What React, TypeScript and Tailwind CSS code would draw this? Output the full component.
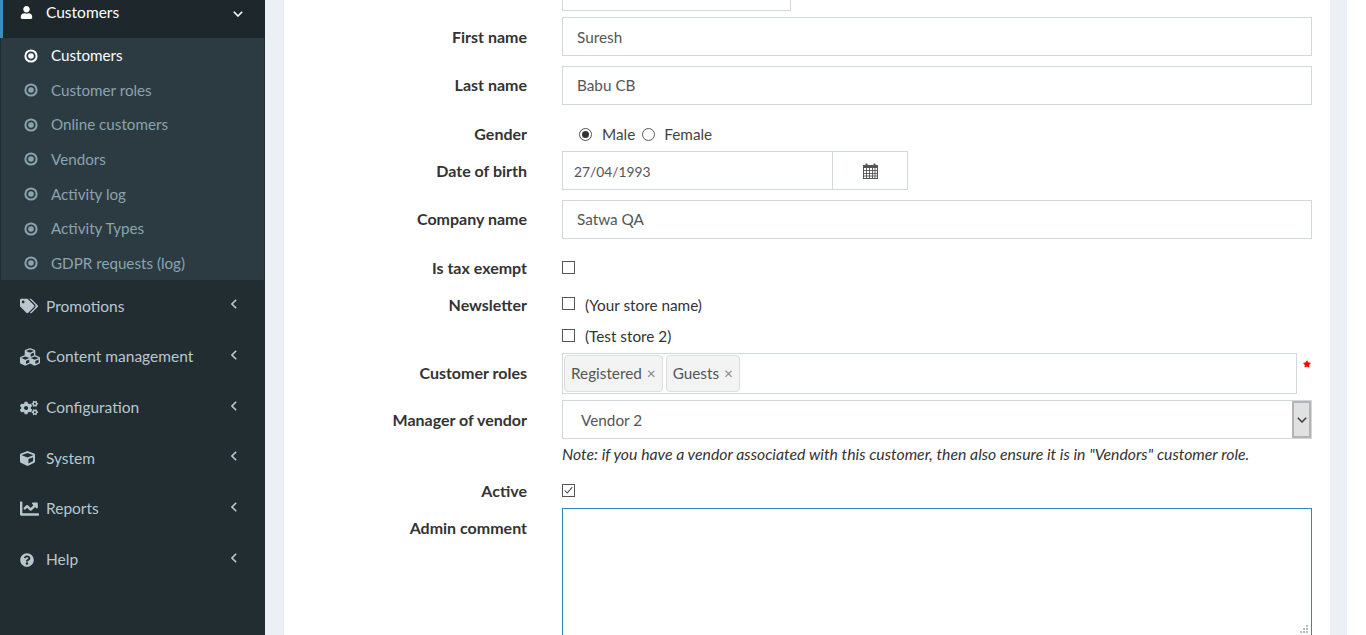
import type { ReactNode } from 'react';
import { FaUser, FaTags, FaCubes, FaCogs, FaCube, FaChartLine, FaQuestionCircle, FaStar } from 'react-icons/fa';

const subItems = ['Customers', 'Customer roles', 'Online customers', 'Vendors', 'Activity log', 'Activity Types', 'GDPR requests (log)'];

const navItems = [
  { label: 'Promotions', icon: <FaTags size={18} /> },
  { label: 'Content management', icon: <FaCubes size={20} /> },
  { label: 'Configuration', icon: <FaCogs size={18} /> },
  { label: 'System', icon: <FaCube size={15} /> },
  { label: 'Reports', icon: <FaChartLine size={19} /> },
  { label: 'Help', icon: <FaQuestionCircle size={14} /> },
];

function DotCircle() {
  return (
    <svg viewBox="0 0 14 14" className="h-[14px] w-[14px]" fill="none" stroke="currentColor">
      <circle cx="7" cy="7" r="5.6" strokeWidth="2" />
      <circle cx="7" cy="7" r="2.8" fill="currentColor" stroke="none" />
    </svg>
  );
}

function AngleDown({ className }: { className?: string }) {
  return (
    <svg viewBox="0 0 10 6" className={`h-[6px] w-[10px] ${className ?? ''}`} fill="none" stroke="currentColor" strokeWidth="1.6">
      <path d="M0.8 0.8 5 5 9.2 0.8" />
    </svg>
  );
}

function AngleLeft() {
  return (
    <svg viewBox="0 0 6 10" className="ml-auto -mt-[4px] h-[10px] w-[6px]" fill="none" stroke="currentColor" strokeWidth="1.6">
      <path d="M5.2 0.8 1 5 5.2 9.2" />
    </svg>
  );
}

function Sidebar() {
  return (
    <aside className="w-[265px] shrink-0 bg-[#222d32] text-[15.5px] text-[#b8c7ce]">
      <div className="flex h-[38px] border-l-[3px] border-[#3c8dbc] bg-[#1e282c] pl-[17px] pr-[22px] text-white">
        <div className="flex h-[25px] w-full items-center">
          <span className="flex w-[26px]"><FaUser size={13} /></span>
          <span>Customers</span>
          <AngleDown className="ml-auto mt-[2px]" />
        </div>
      </div>
      <ul className="h-[242px] border-x border-[#222d32] bg-[#2c3b41] pt-[0.35px] text-[15.2px]">
        {subItems.map((item, i) => (
          <li key={item} className={`flex h-[34.6px] items-center pl-[23px] ${i === 0 ? 'text-white' : 'text-[#8aa4af]'}`}>
            <span className="flex w-[27px]"><DotCircle /></span>
            {item}
          </li>
        ))}
      </ul>
      <ul className="pt-[0.9px]">
        {navItems.map(item => (
          <li key={item.label} className="flex h-[50.7px] items-center pl-[20px] pr-[28px]">
            <span className="flex w-[26px]">{item.icon}</span>
            <span>{item.label}</span>
            <AngleLeft />
          </li>
        ))}
      </ul>
    </aside>
  );
}

function Row({ label, top, height, labelClass, children }: { label?: string; top: string; height: string; labelClass?: string; children: ReactNode }) {
  return (
    <div className={`flex ${top} ${height}`}>
      <label className={`w-[243px] shrink-0 text-right text-[16px] font-bold ${labelClass ?? ''}`}>{label}</label>
      <div className="ml-[35px] min-w-0 flex-1">{children}</div>
    </div>
  );
}

function TextBox({ value, className }: { value: string; className?: string }) {
  return (
    <div className={`flex h-[39px] w-[750px] items-center border border-[#d2d6de] pl-[14px] text-[#555] ${className ?? ''}`}>{value}</div>
  );
}

function Check({ checked }: { checked?: boolean }) {
  return (
    <span className="flex h-[13px] w-[13px] items-center justify-center border border-[#555] bg-white">
      {checked && (
        <svg viewBox="0 0 13 13" className="h-[13px] w-[13px]" fill="none" stroke="#444" strokeWidth="1.2">
          <path d="M2 6.5 5 9.5 11 2.5" />
        </svg>
      )}
    </span>
  );
}

function Radio({ checked }: { checked?: boolean }) {
  return (
    <span className="flex h-[13px] w-[13px] items-center justify-center rounded-full border border-[#555] bg-white">
      {checked && <span className="h-[7px] w-[7px] rounded-full bg-[#333]" />}
    </span>
  );
}

function Tag({ label }: { label: string }) {
  return (
    <span className="flex h-[37px] items-center rounded-[4px] border border-[#ddd] bg-[#f3f3f3] px-[6px] text-[#555]">
      {label}
      <span className="ml-[5px] text-[#888]">×</span>
    </span>
  );
}

function CalendarIcon() {
  return (
    <svg viewBox="0 0 15 16" className="h-[16px] w-[15px]" fill="none" stroke="#555">
      <rect x="0.5" y="2.5" width="14" height="13" />
      <path d="M0.5 3.5h14M0.5 4.5h14" />
      <path d="M0.5 7.5h14M0.5 10.5h14M0.5 13h14M3.5 5v10M6.5 5v10M9.5 5v10M12 5v10" strokeWidth="0.9" />
      <path d="M3.5 0.5v3M11.5 0.5v3" strokeWidth="2" />
    </svg>
  );
}

export default function App() {
  return (
    <div className="flex h-[635px] w-[1366px] overflow-hidden bg-white font-['Lato',sans-serif] text-[15.3px] text-[#333]">
      <Sidebar />
      <main className="w-[1082px] bg-[#ecf0f5] pl-[18px] pr-[17px]">
        <div className="h-[635px] border-l border-[#e4e7ec] bg-white">
          <div className="ml-[278px] h-[11px] w-[229px] border-x border-b border-[#d2d6de]" />

          <Row label="First name" top="mt-[6px]" height="h-[39px]" labelClass="pt-[8px]">
            <TextBox value="Suresh" className="pt-[2px]" />
          </Row>
          <Row label="Last name" top="mt-[10px]" height="h-[39px]" labelClass="pt-[7px]">
            <TextBox value="Babu CB" />
          </Row>
          <Row label="Gender" top="mt-[19px]" height="h-[27px]" labelClass="-mt-[2px]">
            <div className="-mt-[1px] flex items-center pl-[17px] text-[#444]">
              <Radio checked />
              <span className="ml-[10px]">Male</span>
              <span className="ml-[7px]"><Radio /></span>
              <span className="ml-[9px]">Female</span>
            </div>
          </Row>
          <Row label="Date of birth" top="mt-[0px]" height="h-[39px]" labelClass="pt-[8px]">
            <div className="flex h-[39px] w-[346px] border border-[#d2d6de] text-[#555]">
              <div className="flex w-[270px] items-center border-r border-[#d2d6de] pl-[11px] pt-[3px] text-[13.8px]">27/04/1993</div>
              <div className="flex flex-1 items-center justify-center"><CalendarIcon /></div>
            </div>
          </Row>
          <Row label="Company name" top="mt-[10px]" height="h-[39px]" labelClass="pt-[7px]">
            <TextBox value="Satwa QA" />
          </Row>
          <Row label="Is tax exempt" top="mt-[17px]" height="h-[30px]">
            <div className="pt-[5px]"><Check /></div>
          </Row>
          <Row label="Newsletter" top="mt-[8px]" height="h-[29px]" labelClass="-mt-[1px]">
            <div className="flex items-center">
              <span className="-mt-[3px]"><Check /></span>
              <span className="ml-[10px]">(Your store name)</span>
            </div>
          </Row>
          <Row top="mt-[0px]" height="h-[30px]">
            <div className="flex items-center pt-[2px]">
              <span className="-mt-[2px]"><Check /></span>
              <span className="ml-[10px]">(Test store 2)</span>
            </div>
          </Row>
          <Row label="Customer roles" top="mt-[0px]" height="h-[41px]" labelClass="pt-[8px]">
            <div className="relative flex h-[41px] w-[735px] items-center gap-[3px] border border-[#d2d6de] pl-[1px]">
              <Tag label="Registered" />
              <Tag label="Guests" />
              <FaStar size={8} className="absolute -right-[15px] top-[6px] text-[#ff0000]" />
            </div>
          </Row>
          <Row label="Manager of vendor" top="mt-[6px]" height="h-[39px]" labelClass="pt-[8px]">
            <div className="flex h-[39px] w-[750px] items-center justify-between border border-[#d2d6de] pl-[18px] text-[#555]">
              <span className="pt-[1px]">Vendor 2</span>
              <span className="flex h-[37px] w-[19px] items-center justify-center border-2 border-[#b4b4b4] bg-[#e1e1e1] text-[#444]">
                <AngleDown />
              </span>
            </div>
          </Row>
          <Row top="mt-[3px]" height="h-[27px]">
            <p className="text-[15.8px] italic">Note: if you have a vendor associated with this customer, then also ensure it is in "Vendors" customer role.</p>
          </Row>
          <Row label="Active" top="mt-[13px]" height="h-[26px]" labelClass="-mt-[3px]">
            <div className="pt-[2px]"><Check checked /></div>
          </Row>
          <Row label="Admin comment" top="mt-[0px]" height="h-[140px]" labelClass="pt-[8px]">
            <div className="relative h-[140px] w-[750px] border border-[#2f88ba]">
              <svg viewBox="0 0 9 9" className="absolute bottom-[13px] right-[2px] h-[9px] w-[9px]" fill="#bbb">
                <rect x="6" y="0" width="2" height="2" />
                <rect x="3" y="3" width="2" height="2" />
                <rect x="6" y="3" width="2" height="2" />
                <rect x="0" y="6" width="2" height="2" />
                <rect x="3" y="6" width="2" height="2" />
                <rect x="6" y="6" width="2" height="2" />
              </svg>
            </div>
          </Row>
        </div>
      </main>
      <div className="w-[19px] bg-white" />
    </div>
  );
}
